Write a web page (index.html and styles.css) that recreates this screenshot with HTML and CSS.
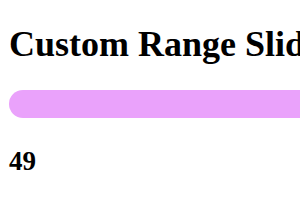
FILE: index.html
```html
<!DOCTYPE html>
<html>
<head>
<meta charset="utf-8">
<link rel="stylesheet" href="styles.css">
</head>
<body>
<div class="page">
  <h1 class="title">Custom Range Slider</h1>
  <div class="slider"></div>
  <h2 class="value">49</h2>
</div>
</body>
</html>
```
FILE: styles.css
```css
html, body {
  margin: 0;
  padding: 0;
  background: #ffffff;
}
body {
  font-family: "Liberation Serif", "Times New Roman", serif;
  color: #000000;
  overflow: hidden;
}
.page {
  padding: 24px 0 0 9px;
  overflow: hidden;
}
.title {
  font-size: 36px;
  font-weight: bold;
  line-height: 41px;
  margin: 0 0 25px 0;
  white-space: nowrap;
}
.slider {
  width: 400px;
  height: 28px;
  border-radius: 14px;
  background: #eaa2fb;
}
.value {
  font-size: 27px;
  font-weight: bold;
  line-height: 31px;
  margin: 28px 0 0 0;
}
```
